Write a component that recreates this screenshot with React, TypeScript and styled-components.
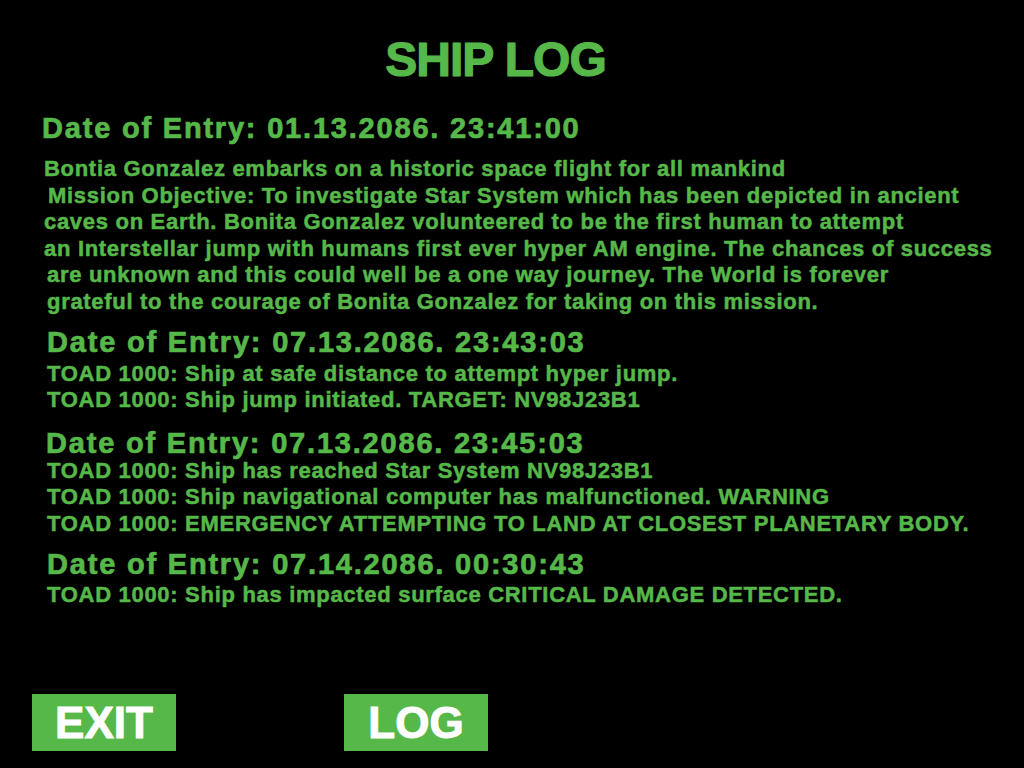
import React from 'react';
import styled, { createGlobalStyle } from 'styled-components';

const GlobalStyle = createGlobalStyle`
  html, body {
    margin: 0;
    padding: 0;
    background: #000000;
  }
  body {
    font-family: 'Liberation Sans', Arial, sans-serif;
  }
`;

const GREEN = '#57b84a';

type Entry = {
  date: string;
  indent: number;
  top: number;
  headGap: number;
  lines: { text: string; indent?: number }[];
};

const entries: Entry[] = [
  {
    date: '01.13.2086. 23:41:00',
    indent: 42,
    top: 0,
    headGap: 10,
    lines: [
      { text: 'Bontia Gonzalez embarks on a historic space flight for all mankind', indent: 2 },
      { text: 'Mission Objective: To investigate Star System which has been depicted in ancient', indent: 6 },
      { text: 'caves on Earth. Bonita Gonzalez volunteered to be the first human to attempt', indent: 2 },
      { text: 'an Interstellar jump with humans first ever hyper AM engine. The chances of success', indent: 2 },
      { text: 'are unknown and this could well be a one way journey. The World is forever', indent: 5 },
      { text: 'grateful to the courage of Bonita Gonzalez for taking on this mission.', indent: 5 },
    ],
  },
  {
    date: '07.13.2086. 23:43:03',
    indent: 47,
    top: 8,
    headGap: 1,
    lines: [
      { text: 'TOAD 1000: Ship at safe distance to attempt hyper jump.' },
      { text: 'TOAD 1000: Ship jump initiated. TARGET: NV98J23B1' },
    ],
  },
  {
    date: '07.13.2086. 23:45:03',
    indent: 46,
    top: 11,
    headGap: -3,
    lines: [
      { text: 'TOAD 1000: Ship has reached Star System NV98J23B1', indent: 1 },
      { text: 'TOAD 1000: Ship navigational computer has malfunctioned. WARNING', indent: 1 },
      { text: 'TOAD 1000: EMERGENCY ATTEMPTING TO LAND AT CLOSEST PLANETARY BODY.', indent: 1 },
    ],
  },
  {
    date: '07.14.2086. 00:30:43',
    indent: 47,
    top: 8,
    headGap: 0,
    lines: [{ text: 'TOAD 1000: Ship has impacted surface CRITICAL DAMAGE DETECTED.' }],
  },
];

const App = () => {
  return (
    <Screen>
      <GlobalStyle />
      <Title>SHIP LOG</Title>
      <Log>
        {entries.map((entry) => (
          <EntryBlock key={entry.date} $indent={entry.indent} $top={entry.top}>
            <EntryDate $gap={entry.headGap}>Date of Entry: {entry.date}</EntryDate>
            {entry.lines.map((line) => (
              <EntryLine key={line.text} $indent={line.indent ?? 0}>
                {line.text}
              </EntryLine>
            ))}
          </EntryBlock>
        ))}
      </Log>
      <ButtonRow>
        <MenuButton>EXIT</MenuButton>
        <MenuButton>LOG</MenuButton>
      </ButtonRow>
    </Screen>
  );
};

export default App;

const Screen = styled.div`
  width: 1024px;
  height: 768px;
  background: #000000;
  color: ${GREEN};
  display: flex;
  flex-direction: column;
  overflow: hidden;
`;

const Title = styled.h1`
  margin: 36px 0 0 0;
  padding-right: 33px;
  text-align: center;
  font-size: 48px;
  line-height: 48px;
  font-weight: bold;
  letter-spacing: -1px;
  -webkit-text-stroke: 1.2px ${GREEN};
`;

const Log = styled.div`
  display: flex;
  flex-direction: column;
  margin-top: 26px;
`;

const EntryBlock = styled.div<{ $indent: number; $top: number }>`
  padding-left: ${(p) => p.$indent}px;
  margin-top: ${(p) => p.$top}px;
  display: flex;
  flex-direction: column;
`;

const EntryDate = styled.div<{ $gap: number }>`
  margin-bottom: ${(p) => p.$gap}px;
  font-size: 29px;
  line-height: 36px;
  font-weight: bold;
  letter-spacing: 1.8px;
  -webkit-text-stroke: 0.7px ${GREEN};
`;

const EntryLine = styled.div<{ $indent: number }>`
  padding-left: ${(p) => p.$indent}px;
  font-size: 22px;
  line-height: 26.6px;
  font-weight: bold;
  letter-spacing: 0.7px;
  white-space: nowrap;
  -webkit-text-stroke: 0.5px ${GREEN};
`;

const ButtonRow = styled.div`
  margin-top: auto;
  margin-bottom: 17px;
  padding-left: 32px;
  display: flex;
  gap: 168px;
`;

const MenuButton = styled.div`
  width: 144px;
  height: 57px;
  background: ${GREEN};
  color: #ffffff;
  font-size: 44px;
  font-weight: bold;
  -webkit-text-stroke: 1px #ffffff;
  display: flex;
  align-items: center;
  justify-content: center;
`;
